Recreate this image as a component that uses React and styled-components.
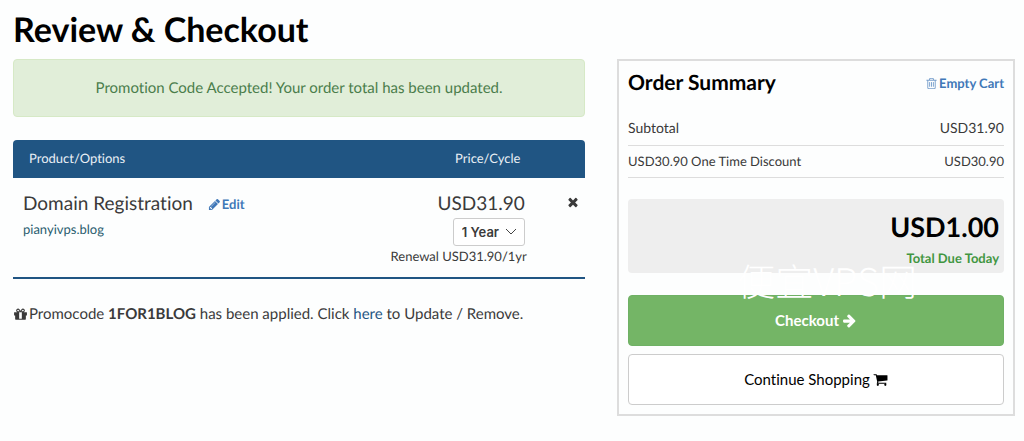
import { useState } from "react";
import styled, { createGlobalStyle } from "styled-components";

const icons = {
  pencil:
    "M491 1536l91-91-235-235-91 91v107h128v128h107zm523-928q0-22-22-22-10 0-17 7l-542 542q-7 7-7 17 0 22 22 22 10 0 17-7l542-542q7-7 7-17zm-54-192l416 416-832 832h-416v-416zm683 96q0 53-37 90l-166 166-416-416 166-165q36-38 90-38 53 0 91 38l235 234q37 39 37 91z",
  times:
    "M1490 1322q0 40-28 68l-136 136q-28 28-68 28t-68-28l-294-294-294 294q-28 28-68 28t-68-28l-136-136q-28-28-28-68t28-68l294-294-294-294q-28-28-28-68t28-68l136-136q28-28 68-28t68 28l294 294 294-294q28-28 68-28t68 28l136 136q28 28 28 68t-28 68l-294 294 294 294q28 28 28 68z",
  gift:
    "M1056 1356v-716h-320v716q0 25 18 38.5t46 13.5h192q28 0 46-13.5t18-38.5zm-456-844h195l-126-161q-26-31-69-31-40 0-68 28t-28 68 28 68 68 28zm688-96q0-40-28-68t-68-28q-43 0-69 31l-125 161h194q40 0 68-28t28-68zm376 256v320q0 14-9 23t-23 9h-96v416q0 40-28 68t-68 28h-1088q-40 0-68-28t-28-68v-416h-96q-14 0-23-9t-9-23v-320q0-14 9-23t23-9h440q-93 0-158.5-65.5t-65.5-158.5 65.5-158.5 158.5-65.5q107 0 168 77l128 165 128-165q61-77 168-77 93 0 158.5 65.5t65.5 158.5-65.5 158.5-158.5 65.5h440q14 0 23 9t9 23z",
  trash:
    "M704 736v576q0 14-9 23t-23 9h-64q-14 0-23-9t-9-23v-576q0-14 9-23t23-9h64q14 0 23 9t9 23zm256 0v576q0 14-9 23t-23 9h-64q-14 0-23-9t-9-23v-576q0-14 9-23t23-9h64q14 0 23 9t9 23zm256 0v576q0 14-9 23t-23 9h-64q-14 0-23-9t-9-23v-576q0-14 9-23t23-9h64q14 0 23 9t9 23zm128 724v-948h-896v948q0 22 7 40.5t14.5 27 10.5 8.5h832q3 0 10.5-8.5t14.5-27 7-40.5zm-672-1076h448l-48-117q-7-9-17-11h-317q-10 2-17 11zm928 32v64q0 14-9 23t-23 9h-96v948q0 83-47 143.5t-113 60.5h-832q-66 0-113-58.5t-47-141.5v-952h-96q-14 0-23-9t-9-23v-64q0-14 9-23t23-9h309l70-167q15-37 54-63t79-26h320q40 0 79 26t54 63l70 167h309q14 0 23 9t9 23z",
  arrow:
    "M1600 960q0 54-37 91l-651 651q-39 37-91 37-51 0-90-37l-75-75q-38-38-38-91t38-91l293-293h-704q-52 0-84.5-37.5t-32.5-90.5v-128q0-53 32.5-90.5t84.5-37.5h704l-293-294q-38-36-38-90t38-90l75-75q38-38 90-38 53 0 91 38l651 651q37 35 37 90z",
  cart:
    "M704 1536q0 52-38 90t-90 38-90-38-38-90 38-90 90-38 90 38 38 90zm896 0q0 52-38 90t-90 38-90-38-38-90 38-90 90-38 90 38 38 90zm128-1088v512q0 24-16.5 42.5t-40.5 21.5l-1044 122q13 60 13 70 0 16-24 64h920q26 0 45 19t19 45-19 45-45 19h-1024q-26 0-45-19t-19-45q0-11 8-31.5t16-36 21.5-40 15.5-29.5l-177-823h-204q-26 0-45-19t-19-45 19-45 45-19h256q16 0 28.5 6.5t19.5 15.5 13 24.5 8 26 5.5 29.5 4.5 26h1201q26 0 45 19t19 45z",
};

function Icon({ name, size = 15 }) {
  return (
    <Glyph $size={size} viewBox="0 0 1792 1792" aria-hidden="true">
      <path d={icons[name]} />
    </Glyph>
  );
}

function App() {
  const [cycle, setCycle] = useState("1");

  return (
    <Page>
      <GlobalStyle />
      <Title>Review &amp; Checkout</Title>
      <Columns>
        <section>
          <Alert role="status">
            Promotion Code Accepted! Your order total has been updated.
          </Alert>
          <CartTable>
            <colgroup>
              <Col $width={66} />
              <Col $width={24} />
              <Col $width={10} />
            </colgroup>
            <thead>
              <tr>
                <HeadCell>Product/Options</HeadCell>
                <HeadCell $center colSpan={2}>
                  Price/Cycle
                </HeadCell>
              </tr>
            </thead>
            <tbody>
              <tr>
                <ProductCell>
                  <ProductLine>
                    <ProductName>Domain Registration</ProductName>
                    <ActionLink href="#edit">
                      <Icon name="pencil" size={13} />
                      Edit
                    </ActionLink>
                  </ProductLine>
                  <Domain>pianyivps.blog</Domain>
                </ProductCell>
                <PriceCell>
                  <Price>USD31.90</Price>
                  <SelectWrap>
                    <Select
                      aria-label="Billing cycle"
                      value={cycle}
                      onChange={(e) => setCycle(e.target.value)}
                    >
                      <option value="1">1 Year</option>
                    </Select>
                    <Chevron viewBox="0 0 12 8" aria-hidden="true">
                      <path d="M1 1l5 5 5-5" />
                    </Chevron>
                  </SelectWrap>
                  <Renewal>Renewal USD31.90/1yr</Renewal>
                </PriceCell>
                <RemoveCell>
                  <RemoveButton type="button" aria-label="Remove">
                    <Icon name="times" size={14} />
                  </RemoveButton>
                </RemoveCell>
              </tr>
            </tbody>
          </CartTable>
          <Promo>
            <Icon name="gift" />
            <span>
              Promocode <b>1FOR1BLOG</b> has been applied. Click{" "}
              <a href="#promo">here</a> to Update / Remove.
            </span>
          </Promo>
        </section>

        <Summary>
          <SummaryHeader>
            <SummaryTitle>Order Summary</SummaryTitle>
            <ActionLink href="#empty">
              <FadedIcon>
                <Icon name="trash" size={13} />
              </FadedIcon>
              Empty Cart
            </ActionLink>
          </SummaryHeader>
          <SummaryRow>
            <span>Subtotal</span>
            <span>USD31.90</span>
          </SummaryRow>
          <SummaryRow $small>
            <span>USD30.90 One Time Discount</span>
            <span>USD30.90</span>
          </SummaryRow>
          <Total>
            <Amount>USD1.00</Amount>
            <Due>Total Due Today</Due>
            <Watermark>便宜VPS网</Watermark>
          </Total>
          <Button type="button" $primary>
            Checkout
            <Icon name="arrow" />
          </Button>
          <Button type="button">
            Continue Shopping
            <Icon name="cart" />
          </Button>
        </Summary>
      </Columns>
    </Page>
  );
}

const GlobalStyle = createGlobalStyle`
  * {
    box-sizing: border-box;
  }
  body {
    margin: 0;
    background: #fdfefe;
    color: #3a3a3a;
    font-family: Lato, sans-serif;
    font-size: 15px;
    line-height: 20px;
    font-variant-ligatures: none;
    text-rendering: geometricPrecision;
  }
  a {
    color: #1f5583;
    text-decoration: none;
  }
`;
const Glyph = styled.svg`
  width: ${(p) => p.$size}px;
  height: ${(p) => p.$size}px;
  fill: currentColor;
  vertical-align: -2px;
  flex: none;
`;
const Page = styled.main`
  padding: 9px 9px 24px 13px;
`;
const Title = styled.h1`
  margin: 0 0 8px;
  color: #000;
  font-size: 34px;
  line-height: 42px;
`;
const Columns = styled.div`
  display: grid;
  grid-template-columns: 23fr 16fr;
  gap: 32px;
  align-items: start;
`;
const Alert = styled.div`
  margin-bottom: 23px;
  padding: 18px;
  border: 1px solid #d6e9c6;
  border-radius: 4px;
  background: #e1eed9;
  color: #4a7d4b;
  text-align: center;
`;
const CartTable = styled.table`
  width: 100%;
  table-layout: fixed;
  border-spacing: 0;
  border-bottom: 2px solid #205583;
`;
const Col = styled.col`
  width: ${(p) => p.$width}%;
`;
const HeadCell = styled.th`
  padding: 8px 16px 10px;
  background: #205583;
  color: #e9eff5;
  font-size: 13px;
  font-weight: 400;
  text-align: ${(p) => (p.$center ? "center" : "left")};
  &:first-child {
    border-top-left-radius: 4px;
  }
  &:last-child {
    border-top-right-radius: 4px;
  }
`;
const ProductCell = styled.td`
  padding: 13px 10px 11px;
  vertical-align: top;
`;
const ProductLine = styled.div`
  display: flex;
  align-items: center;
  gap: 15px;
`;
const ProductName = styled.span`
  font-size: 19px;
  line-height: 26px;
`;
const ActionLink = styled.a`
  display: inline-flex;
  align-items: center;
  gap: 1px;
  color: #4078b8;
  font-size: 13px;
  font-weight: 700;
`;
const Domain = styled.div`
  color: #2a5d6e;
  font-size: 13px;
  line-height: 24px;
`;
const PriceCell = styled.td`
  padding: 13px 3px 11px 0;
  text-align: right;
  vertical-align: top;
`;
const Price = styled.div`
  font-size: 19px;
  line-height: 26px;
`;
const SelectWrap = styled.div`
  display: inline-grid;
  align-items: center;
  margin-top: 1px;
  vertical-align: top;
`;
const Select = styled.select`
  grid-area: 1 / 1;
  width: 72px;
  height: 28px;
  padding: 0 8px;
  border: 1px solid #ccc;
  border-radius: 3px;
  background: #fff;
  color: #3a3a3a;
  font-family: Inter, sans-serif;
  font-size: 13px;
  font-weight: 600;
  appearance: none;
`;
const Chevron = styled.svg`
  grid-area: 1 / 1;
  justify-self: end;
  width: 12px;
  height: 8px;
  margin-right: 8px;
  fill: none;
  stroke: #444;
  pointer-events: none;
`;
const Renewal = styled.div`
  font-size: 13px;
  white-space: nowrap;
`;
const RemoveCell = styled.td`
  padding: 14px 5px 0;
  text-align: right;
  vertical-align: top;
`;
const RemoveButton = styled.button`
  padding: 0;
  border: 0;
  background: none;
  color: #3a3a3a;
`;
const Promo = styled.p`
  display: flex;
  align-items: center;
  gap: 1px;
  margin: 25px 0 0;
`;
const Summary = styled.aside`
  display: flex;
  flex-direction: column;
  padding: 9px;
  border: 2px solid #ddd;
`;
const SummaryHeader = styled.header`
  display: flex;
  align-items: center;
  justify-content: space-between;
  margin-bottom: 22px;
`;
const SummaryTitle = styled.h2`
  margin: 0;
  color: #000;
  font-size: 21px;
  line-height: 26px;
`;
const FadedIcon = styled.span`
  display: inline-flex;
  opacity: 0.7;
`;
const SummaryRow = styled.div`
  display: flex;
  justify-content: space-between;
  padding-bottom: 7px;
  border-bottom: 1px solid #ddd;
  font-size: ${(p) => (p.$small ? 13 : 14)}px;
  & + & {
    padding: 5px 0 6px;
  }
`;
const Total = styled.div`
  position: relative;
  margin: 21px 0 22px;
  padding: 12px 5px 5px;
  border-radius: 4px;
  background: #eee;
  text-align: right;
`;
const Amount = styled.div`
  color: #000;
  font-size: 27px;
  font-weight: 700;
  line-height: 32px;
`;
const Due = styled.div`
  margin-top: 5px;
  color: #419641;
  font-size: 13px;
  font-weight: 700;
`;
const Watermark = styled.span`
  position: absolute;
  top: 65px;
  right: 87px;
  z-index: 1;
  color: #fff;
  font-family: "Noto Sans CJK SC", sans-serif;
  font-size: 38px;
  font-weight: 300;
  line-height: 32px;
  pointer-events: none;
`;
const Button = styled.button`
  display: flex;
  align-items: center;
  justify-content: center;
  gap: 3px;
  padding: 15px;
  border: 1px solid ${(p) => (p.$primary ? "#6fb165" : "#ccc")};
  border-radius: 4px;
  background: ${(p) => (p.$primary ? "#74b566" : "#fff")};
  color: ${(p) => (p.$primary ? "#fff" : "#000")};
  font-family: inherit;
  font-size: 15px;
  font-weight: ${(p) => (p.$primary ? 700 : 400)};
  font-variant-ligatures: none;
  line-height: 19px;
  & + & {
    margin-top: 8px;
  }
`;
export default App;
